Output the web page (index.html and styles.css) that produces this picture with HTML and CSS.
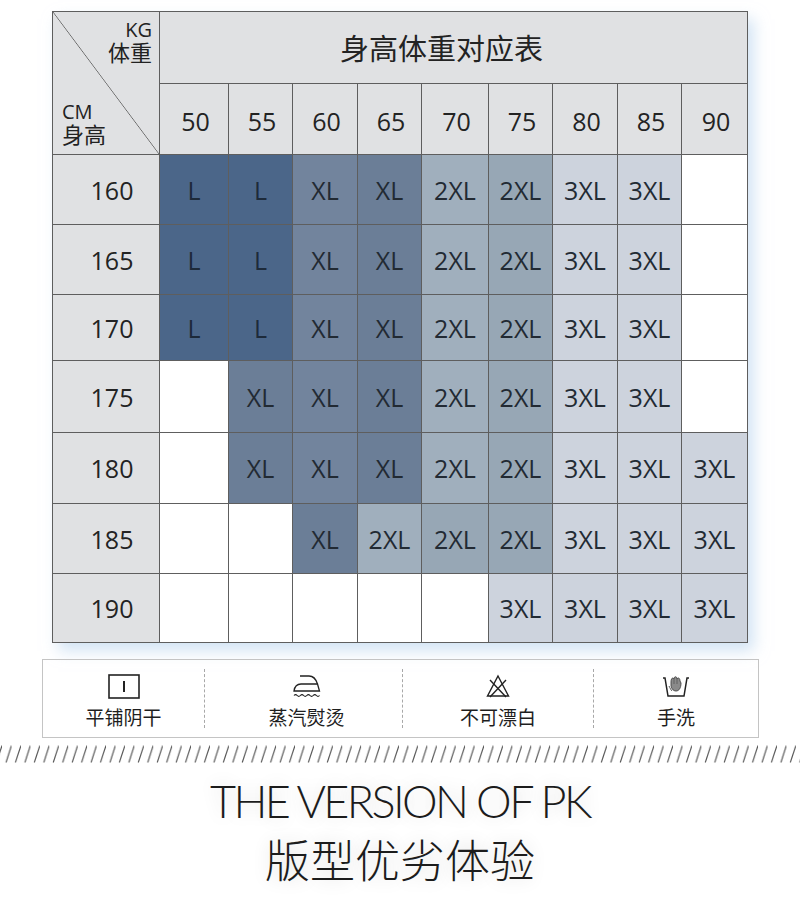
FILE: index.html
```html
<!DOCTYPE html>
<html lang="zh-CN">
<head>
<meta charset="utf-8">
<title>身高体重对应表</title>
<link rel="stylesheet" href="styles.css">
</head>
<body>
<div class="page">
  <div class="chart">
    <div class="corner">
      <div class="corner-top"><span class="en">KG</span><span>体重</span></div>
      <div class="corner-bottom"><span class="en">CM</span><span>身高</span></div>
    </div>
    <div class="title">身高体重对应表</div>
    <div class="hd">50</div><div class="hd">55</div><div class="hd">60</div><div class="hd">65</div><div class="hd">70</div><div class="hd">75</div><div class="hd">80</div><div class="hd">85</div><div class="hd">90</div>

    <div class="rh">160</div>
    <div class="c l">L</div><div class="c l">L</div><div class="c xl">XL</div><div class="c xlb">XL</div><div class="c t2">2XL</div><div class="c t2b">2XL</div><div class="c t3">3XL</div><div class="c t3">3XL</div><div class="c w"></div>

    <div class="rh">165</div>
    <div class="c l">L</div><div class="c l">L</div><div class="c xl">XL</div><div class="c xlb">XL</div><div class="c t2">2XL</div><div class="c t2b">2XL</div><div class="c t3">3XL</div><div class="c t3">3XL</div><div class="c w"></div>

    <div class="rh">170</div>
    <div class="c l">L</div><div class="c l">L</div><div class="c xl">XL</div><div class="c xlb">XL</div><div class="c t2">2XL</div><div class="c t2b">2XL</div><div class="c t3">3XL</div><div class="c t3">3XL</div><div class="c w"></div>

    <div class="rh">175</div>
    <div class="c w"></div><div class="c xlb">XL</div><div class="c xl">XL</div><div class="c xlb">XL</div><div class="c t2">2XL</div><div class="c t2b">2XL</div><div class="c t3">3XL</div><div class="c t3">3XL</div><div class="c w"></div>

    <div class="rh">180</div>
    <div class="c w"></div><div class="c xlb">XL</div><div class="c xl">XL</div><div class="c xlb">XL</div><div class="c t2">2XL</div><div class="c t2b">2XL</div><div class="c t3">3XL</div><div class="c t3">3XL</div><div class="c t3">3XL</div>

    <div class="rh">185</div>
    <div class="c w"></div><div class="c w"></div><div class="c xlb">XL</div><div class="c t2">2XL</div><div class="c t2b">2XL</div><div class="c t2b">2XL</div><div class="c t3">3XL</div><div class="c t3">3XL</div><div class="c t3">3XL</div>

    <div class="rh">190</div>
    <div class="c w"></div><div class="c w"></div><div class="c w"></div><div class="c w"></div><div class="c w"></div><div class="c t3">3XL</div><div class="c t3">3XL</div><div class="c t3">3XL</div><div class="c t3">3XL</div>
  </div>

  <div class="care">
    <div class="care-item">
      <svg class="icon" width="32" height="25" viewBox="0 0 32 25"><rect x="1" y="1" width="30" height="23" fill="none" stroke="#222" stroke-width="1.6"/><line x1="16" y1="7" x2="16" y2="18" stroke="#222" stroke-width="2"/></svg>
      <span class="care-label">平铺阴干</span>
    </div>
    <div class="care-item shift">
      <svg class="icon" width="28" height="25" viewBox="0 0 28 25"><path d="M7 2 H16 Q22 2 24.5 10" fill="none" stroke="#222" stroke-width="1.3"/><path d="M1 17 Q2 10 8 10 H24.5 L26.5 17 Z" fill="none" stroke="#222" stroke-width="1.3"/><path d="M1 21.5 q1.6 -1.8 3.2 0 t3.2 0 t3.2 0 t3.2 0 t3.2 0 t3.2 0 t3.2 0 t3.2 0" fill="none" stroke="#222" stroke-width="1.1"/></svg>
      <span class="care-label">蒸汽熨烫</span>
    </div>
    <div class="care-item">
      <svg class="icon" width="24" height="25" viewBox="0 0 24 25"><path d="M12 2 L22.5 22 H1.5 Z" fill="none" stroke="#222" stroke-width="1.4"/><path d="M4 6 L20 23 M20 6 L4 23" fill="none" stroke="#222" stroke-width="1.4"/></svg>
      <span class="care-label">不可漂白</span>
    </div>
    <div class="care-item">
      <svg class="icon" width="28" height="25" viewBox="0 0 28 25"><path d="M1 4 H3 L6 22 H22 L25 4 H27" fill="none" stroke="#222" stroke-width="1.5"/><path d="M9 8 C9 4 11 3 12 5 C12 2 15 2 15 5 C16 3 18 4 18 7 L19 9 C19 14 17 17 14 17 C11 17 9 14 9 11 Z" fill="#8a8a8a" stroke="#444" stroke-width="0.9"/><path d="M12 5 V10 M15 5 V10" stroke="#555" stroke-width="0.8"/><path d="M7 12 C8 14 9 16 10 17" fill="none" stroke="#444" stroke-width="0.9"/></svg>
      <span class="care-label">手洗</span>
    </div>
  </div>

  <svg class="slashes" width="800" height="18" viewBox="0 0 800 18">
    <defs>
      <pattern id="sl" patternUnits="userSpaceOnUse" width="9.45" height="18" x="2">
        <line x1="4" y1="17.5" x2="9.5" y2="0.5" stroke="#555" stroke-width="1.1"/>
      </pattern>
    </defs>
    <rect x="0" y="0" width="800" height="18" fill="url(#sl)"/>
  </svg>

  <div class="tagline">
    <div class="tag-en">THE VERSION OF PK</div>
    <div class="tag-cn">版型优劣体验</div>
  </div>
</div>
</body>
</html>
```
FILE: styles.css
```css
* { box-sizing: border-box; }
html, body { margin: 0; padding: 0; background: #fff; }
body { width: 800px; height: 907px; overflow: hidden; font-family: "Open Sans", "Noto Sans CJK SC", sans-serif; color: #222; }
.page { display: flex; flex-direction: column; }

.chart {
  margin: 11px 0 0 52px;
  width: 696px;
  display: grid;
  grid-template-columns: 107px 69px 64px 65px 64px 67px 64px 65px 64px 66px;
  grid-template-rows: 72px 71px 70px 70px 66px 72px 71px 70px 69px;
  border-top: 1px solid #5e5e5e;
  border-left: 1px solid #5e5e5e;
  box-shadow: 6px 8px 14px rgba(175, 205, 235, 0.55);
}
.chart > div {
  border-right: 1px solid #5e5e5e;
  border-bottom: 1px solid #5e5e5e;
  display: flex;
  align-items: center;
  justify-content: center;
  font-size: 25px;
  color: #232323;
}
.corner {
  grid-row: 1 / span 2;
  grid-column: 1;
  background: #e0e1e3 linear-gradient(to top right, transparent calc(50% - 0.7px), #6a6a6a 50%, transparent calc(50% + 0.7px));
  flex-direction: column;
  align-items: stretch !important;
  justify-content: space-between !important;
  padding: 8px 7px 9px 9px;
}
.corner-top, .corner-bottom {
  display: flex;
  flex-direction: column;
  color: #222;
  font-family: "Noto Sans CJK SC", sans-serif;
  font-size: 22px;
  line-height: 24px;
}
.corner .en { font-family: "Open Sans", sans-serif; font-size: 20px; line-height: 19px; }
.corner-top { align-items: flex-end; }
.corner-bottom { align-items: flex-start; }
.title {
  grid-column: 2 / span 9;
  background: #e0e1e3;
  font-family: "Noto Sans CJK SC", sans-serif;
  font-size: 29px !important;
  padding: 0 24px 2px 0;
}
.hd { background: #e0e1e3; padding: 4px 0 0 3px; }
.rh { background: #e0e1e3; padding-left: 12px; }
.c { color: #222a33 !important; }
.l { background: #4b6689; color: #1d2a3a !important; }
.xl { background: #72849d; }
.xlb { background: #6b7e97; }
.t2 { background: #a0afbd; }
.t2b { background: #97a7b5; }
.t3 { background: #cdd3dd; }
.w { background: #fff; }

.care {
  margin: 16px 0 0 42px;
  width: 717px;
  height: 79px;
  border: 1px solid #c4c4c4;
  display: grid;
  grid-template-columns: 161px 198px 191px 165px;
  padding: 9px 0 10px;
}
.care-item {
  display: flex;
  flex-direction: column;
  align-items: center;
  gap: 7px;
  padding-top: 5px;
}
.care-item + .care-item { border-left: 1px dashed #a8a8a8; }
.care-item.shift { padding-left: 6px; }
.icon { display: block; }
.care-label { font-family: "Noto Sans CJK SC", sans-serif; font-size: 19px; line-height: 22px; color: #1e1e1e; }

.slashes { display: block; margin-top: 7px; }

.tagline {
  display: flex;
  flex-direction: column;
  align-items: center;
  color: #1c1c1c;
  text-shadow: 0 0 18px rgba(0, 0, 0, 0.16);
}
.tag-en {
  margin-top: 12px;
  font-family: "Lato", "Open Sans", sans-serif;
  font-weight: 300;
  font-size: 45px;
  line-height: 52px;
  letter-spacing: -2.6px;
}
.tag-cn {
  margin-top: 6px;
  font-family: "Noto Sans CJK SC", sans-serif;
  font-weight: 300;
  font-size: 45px;
  line-height: 52px;
}
```
